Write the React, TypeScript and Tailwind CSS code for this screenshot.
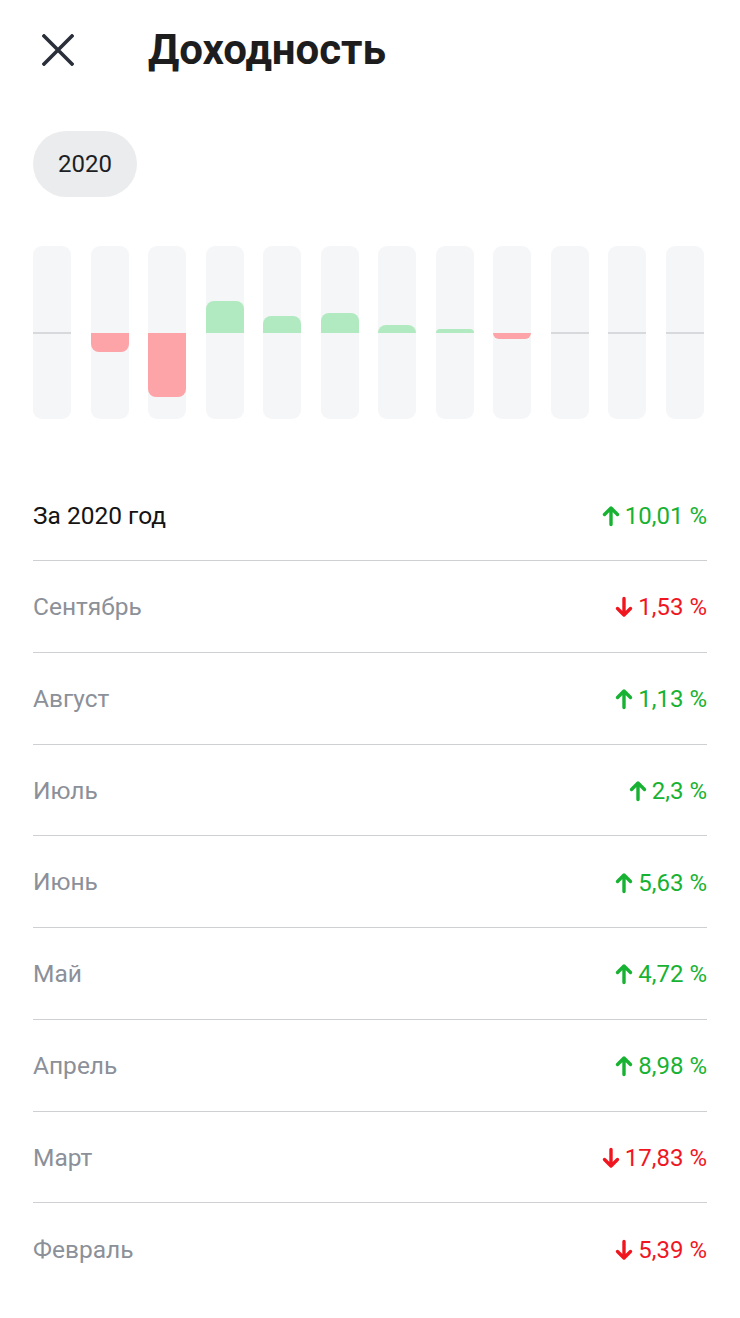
import React from 'react';

const bars = [0, -5.39, -17.83, 8.98, 4.72, 5.63, 2.3, 1.13, -1.53, 0, 0, 0];

const rows = [
  { label: 'Сентябрь', value: -1.53, text: '1,53 %' },
  { label: 'Август', value: 1.13, text: '1,13 %' },
  { label: 'Июль', value: 2.3, text: '2,3 %' },
  { label: 'Июнь', value: 5.63, text: '5,63 %' },
  { label: 'Май', value: 4.72, text: '4,72 %' },
  { label: 'Апрель', value: 8.98, text: '8,98 %' },
  { label: 'Март', value: -17.83, text: '17,83 %' },
  { label: 'Февраль', value: -5.39, text: '5,39 %' },
];

const Arrow = ({ up }: { up: boolean }) => (
  <svg width="18" height="22" viewBox="0 0 18 22" className={up ? '' : 'rotate-180'}>
    <path d="M9 19.5V3.5M2.5 9.5L9 3L15.5 9.5" fill="none" stroke="currentColor" strokeWidth="3.4" strokeLinecap="round" strokeLinejoin="round" />
  </svg>
);

const Value = ({ value, text }: { value: number; text: string }) => (
  <div className={`flex items-center gap-[5px] text-[24px] ${value < 0 ? 'text-[#f0161f]' : 'text-[#18b232]'}`}>
    <Arrow up={value >= 0} />
    <span>{text}</span>
  </div>
);

const Bar = ({ value }: { value: number }) => {
  const px = Math.abs(value) * 3.6;
  return (
    <div className="w-[38px] h-[173px] bg-[#f5f6f8] rounded-[9px] flex flex-col">
      <div className="h-[87px] flex flex-col justify-end">
        {value > 0 && <div className="bg-[#b1eac0] rounded-t-[8px]" style={{ height: px }} />}
      </div>
      {value === 0 && <div className="h-[2px] -mt-[1px] bg-[#d8d9dc]" />}
      <div className="flex-1 flex flex-col">
        {value < 0 && <div className="bg-[#fca4a7] rounded-b-[8px]" style={{ height: px }} />}
      </div>
    </div>
  );
};

export default function App() {
  return (
    <div className="w-[740px] h-[1318px] bg-white font-['Roboto',sans-serif] overflow-hidden">
      <div className="flex items-center h-[100px] px-[42px]">
        <svg width="32" height="32" viewBox="0 0 32 32">
          <path d="M2 2L30 30M30 2L2 30" stroke="#2a2f3a" strokeWidth="3.6" strokeLinecap="square" />
        </svg>
        <h1 className="ml-[74px] text-[42px] font-bold text-[#1d1d1d] -mt-[1px]">Доходность</h1>
      </div>

      <div className="px-[33px] pt-[31px]">
        <div className="w-[104px] h-[66px] rounded-full bg-[#ebecee] flex items-center justify-center text-[24px] text-[#1d1f24]">
          2020
        </div>
      </div>

      <div className="flex justify-between ml-[33px] mr-[36px] mt-[49px]">
        {bars.map((v, i) => (
          <Bar key={i} value={v} />
        ))}
      </div>

      <div className="mx-[33px] mt-[51px]">
        <div className="h-[91px] pt-[2px] flex items-center justify-between border-b border-[#cfd0d3]">
          <span className="text-[24.5px] text-[#141414]">За 2020 год</span>
          <Value value={10.01} text="10,01 %" />
        </div>
        {rows.map((r, i) => (
          <div
            key={r.label}
            className={`h-[91.75px] pt-[2px] flex items-center justify-between ${i < rows.length - 1 ? 'border-b border-[#cfd0d3]' : ''}`}
          >
            <span className="text-[24.5px] text-[#8b9099]">{r.label}</span>
            <Value value={r.value} text={r.text} />
          </div>
        ))}
      </div>
    </div>
  );
}
